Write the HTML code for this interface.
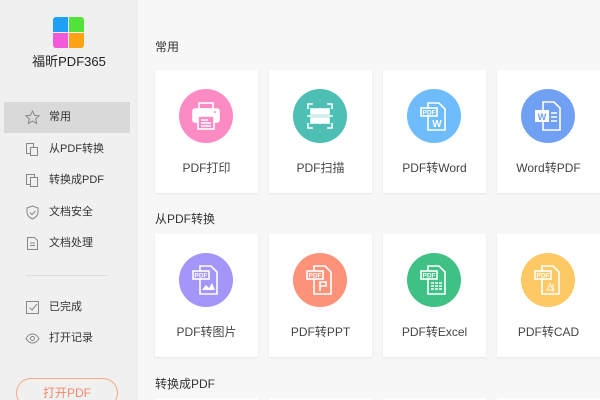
<!DOCTYPE html>
<html style="width:600px;height:400px;overflow:hidden"><head><meta charset="utf-8"><style>
*{margin:0;padding:0;box-sizing:border-box}
body{width:600px;height:400px;overflow:hidden;background:#f7f7f7;font-family:"Liberation Sans","Noto Sans CJK SC",sans-serif;position:relative;color:#333}
.side{position:absolute;left:0;top:0;width:138px;height:400px;background:#f0f0f0}
.logo{position:absolute;left:53px;top:17px;width:31px;height:31px}
.logo div{position:absolute;width:15px;height:15px}
.brand{position:absolute;left:0;width:138px;top:51px;text-align:center;font-size:13px;color:#222}
.item{position:absolute;left:4px;width:126px;height:31px;font-size:11px;color:#333;line-height:31px;padding-left:45px}
.item svg{position:absolute;left:21px;top:8px}
.act{background:#d9d9d9}
.div{position:absolute;left:26px;top:275px;width:82px;height:1px;background:#ddd}
.btn{position:absolute;left:16px;top:378px;width:102px;height:30px;border:1px solid #f7a98c;border-radius:15px;color:#f08a6a;font-size:12px;text-align:center;line-height:28px}
.sec{position:absolute;left:155px;font-size:12px;color:#333}
.card{position:absolute;width:103px;height:123px;background:#fff;box-shadow:0 1px 2px rgba(0,0,0,.08)}
.card .c{position:absolute;left:24px;top:19px;width:54px;height:54px;border-radius:50%}
.card .c svg{position:absolute;left:0;top:0}
.card .t{position:absolute;top:89px;width:100%;text-align:center;font-size:12px;color:#444}
</style></head><body>
<div class="side">
 <div class="logo"><div style="left:0;top:0;background:#1da1f7;border-radius:3px 0 0 0"></div><div style="left:16px;top:0;background:#52e23a;border-radius:0 3px 0 0"></div><div style="left:0;top:16px;background:#f35ad9;border-radius:0 0 0 3px"></div><div style="left:16px;top:16px;background:#fea315;border-radius:0 0 3px 0"></div></div>
 <div class="brand">福昕PDF365</div>
 <div class="item act" style="top:102px"><svg width="15" height="15" viewBox="0 0 15 15"><path d="M7.5 1l2 4.3 4.6.5-3.4 3.1 1 4.6-4.2-2.4-4.2 2.4 1-4.6L.9 5.8l4.6-.5z" fill="none" stroke="#888" stroke-width="1"/></svg>常用</div>
 <div class="item" style="top:134px"><svg width="15" height="15" viewBox="0 0 15 15" fill="none" stroke="#888"><rect x="1.5" y="1.5" width="7" height="10"/><rect x="5.5" y="5.5" width="7" height="8" fill="#f0f0f0"/></svg>从PDF转换</div>
 <div class="item" style="top:165px"><svg width="15" height="15" viewBox="0 0 15 15" fill="none" stroke="#888"><rect x="1.5" y="1.5" width="8" height="10"/><rect x="5.5" y="4.5" width="7" height="9" fill="#f0f0f0"/></svg>转换成PDF</div>
 <div class="item" style="top:197px"><svg width="15" height="15" viewBox="0 0 15 15" fill="none" stroke="#888"><path d="M7.5 1l5.5 2v4.5c0 3-2.5 5-5.5 6.5C4.5 12.5 2 10.5 2 7.5V3z"/><path d="M5 7.5l2 2 3.5-3.5"/></svg>文档安全</div>
 <div class="item" style="top:228px"><svg width="15" height="15" viewBox="0 0 15 15" fill="none" stroke="#888"><path d="M2.5 1.5h7l3 3v9h-10z"/><path d="M5 7h5M5 9.5h5"/></svg>文档处理</div>
 <div class="div"></div>
 <div class="item" style="top:292px"><svg width="15" height="15" viewBox="0 0 15 15" fill="none" stroke="#888"><rect x="1.5" y="1.5" width="12" height="12"/><path d="M4.5 7.5l2.5 2.5 5-6"/></svg>已完成</div>
 <div class="item" style="top:323px"><svg width="15" height="15" viewBox="0 0 15 15" fill="none" stroke="#888"><path d="M1 7.5C3 4 5 3 7.5 3s4.5 1 6.5 4.5C12 11 10 12 7.5 12S3 11 1 7.5z"/><circle cx="7.5" cy="7.5" r="2"/></svg>打开记录</div>
 <div class="btn">打开PDF</div>
</div>

<div class="sec" style="top:38px">常用</div>
<div class="sec" style="top:210px">从PDF转换</div>
<div class="sec" style="top:375px">转换成PDF</div>

<div class="card" style="left:155px;top:70px"><div class="c" style="background:#fd8bc3"><svg width="54" height="54" viewBox="0 0 54 54" fill="none" stroke="#fff" stroke-width="1.6"><rect x="20" y="14" width="14" height="6"/><rect x="14" y="20" width="26" height="13" rx="2" fill="#fff"/><rect x="19" y="27" width="16" height="13" fill="#fd8bc3"/><path d="M22 31h7M22 34h10M22 37h10"/><circle cx="36" cy="23" r="1" fill="#fd8bc3" stroke="none"/></svg></div><div class="t">PDF打印</div></div>
<div class="card" style="left:269px;top:70px"><div class="c" style="background:#4dbfb4"><svg width="54" height="54" viewBox="0 0 54 54" fill="none" stroke="#fff" stroke-width="1.6"><path d="M15 20v-5h5M34 15h5v5M39 34v5h-5M20 39h-5v-5"/><rect x="18" y="20" width="18" height="5" fill="#fff"/><rect x="18" y="29" width="18" height="5" fill="#fff"/><path d="M14 27h26"/></svg></div><div class="t">PDF扫描</div></div>
<div class="card" style="left:383px;top:70px"><div class="c" style="background:#6ebcfb"><svg width="54" height="54" viewBox="0 0 54 54" fill="none" stroke="#fff" stroke-width="1.6"><path d="M21 14h11l6 6v21H21z"/><rect x="14" y="19" width="16" height="8" fill="#6ebcfb"/><text x="22" y="25.5" font-size="6.5" font-family="Liberation Sans" font-weight="bold" fill="#fff" stroke="none" text-anchor="middle">PDF</text><text x="30" y="38" font-size="10" font-family="Liberation Sans" font-weight="bold" fill="#fff" stroke="none" text-anchor="middle">W</text></svg></div><div class="t">PDF转Word</div></div>
<div class="card" style="left:497px;top:70px"><div class="c" style="background:#6fa0f3"><svg width="54" height="54" viewBox="0 0 54 54" fill="none" stroke="#fff" stroke-width="1.6"><path d="M22 13h11l6 6v22H22z"/><rect x="14" y="21" width="14" height="12" fill="#fff" stroke="none"/><text x="21" y="31" font-size="9" font-family="Liberation Sans" font-weight="bold" fill="#6fa0f3" text-anchor="middle" stroke="none">W</text><path d="M30 24h6M30 28h6M30 32h6"/></svg></div><div class="t">Word转PDF</div></div>

<div class="card" style="left:155px;top:234px"><div class="c" style="background:#a495f9"><svg width="54" height="54" viewBox="0 0 54 54" fill="none" stroke="#fff" stroke-width="1.6"><path d="M21 13h11l6 6v22H21z"/><rect x="14" y="18" width="16" height="8" fill="#a495f9"/><text x="22" y="24.5" font-size="6.5" font-family="Liberation Sans" font-weight="bold" fill="#fff" stroke="none" text-anchor="middle">PDF</text><path d="M23 37l4-5 3 3 3-5 3 7z" fill="#fff" stroke="none"/></svg></div><div class="t">PDF转图片</div></div>
<div class="card" style="left:269px;top:234px"><div class="c" style="background:#fc927a"><svg width="54" height="54" viewBox="0 0 54 54" fill="none" stroke="#fff" stroke-width="1.6"><path d="M21 13h11l6 6v22H21z"/><rect x="14" y="18" width="16" height="8" fill="#fc927a"/><text x="22" y="24.5" font-size="6.5" font-family="Liberation Sans" font-weight="bold" fill="#fff" stroke="none" text-anchor="middle">PDF</text><path d="M27 38v-9h6v4h-5"/></svg></div><div class="t">PDF转PPT</div></div>
<div class="card" style="left:383px;top:234px"><div class="c" style="background:#3fc185"><svg width="54" height="54" viewBox="0 0 54 54" fill="none" stroke="#fff" stroke-width="1.6"><path d="M21 13h11l6 6v22H21z"/><rect x="14" y="18" width="16" height="8" fill="#3fc185"/><text x="22" y="24.5" font-size="6.5" font-family="Liberation Sans" font-weight="bold" fill="#fff" stroke="none" text-anchor="middle">PDF</text><path d="M24 30h11M24 33h11M24 36h11" stroke-dasharray="3 1"/></svg></div><div class="t">PDF转Excel</div></div>
<div class="card" style="left:497px;top:234px"><div class="c" style="background:#fec864"><svg width="54" height="54" viewBox="0 0 54 54" fill="none" stroke="#fff" stroke-width="1.6"><path d="M21 13h11l6 6v22H21z"/><rect x="14" y="18" width="16" height="8" fill="#fec864"/><text x="22" y="24.5" font-size="6.5" font-family="Liberation Sans" font-weight="bold" fill="#fff" stroke="none" text-anchor="middle">PDF</text><text x="29" y="36" font-size="8" font-family="Liberation Sans" fill="#fff" stroke="none" text-anchor="middle">A</text><path d="M25 37h9M32 31v8" stroke-width="1"/></svg></div><div class="t">PDF转CAD</div></div>

<div class="card" style="left:155px;top:398px;height:2px"></div><div class="card" style="left:269px;top:398px;height:2px"></div><div class="card" style="left:383px;top:398px;height:2px"></div><div class="card" style="left:497px;top:398px;height:2px"></div>
</body></html>
